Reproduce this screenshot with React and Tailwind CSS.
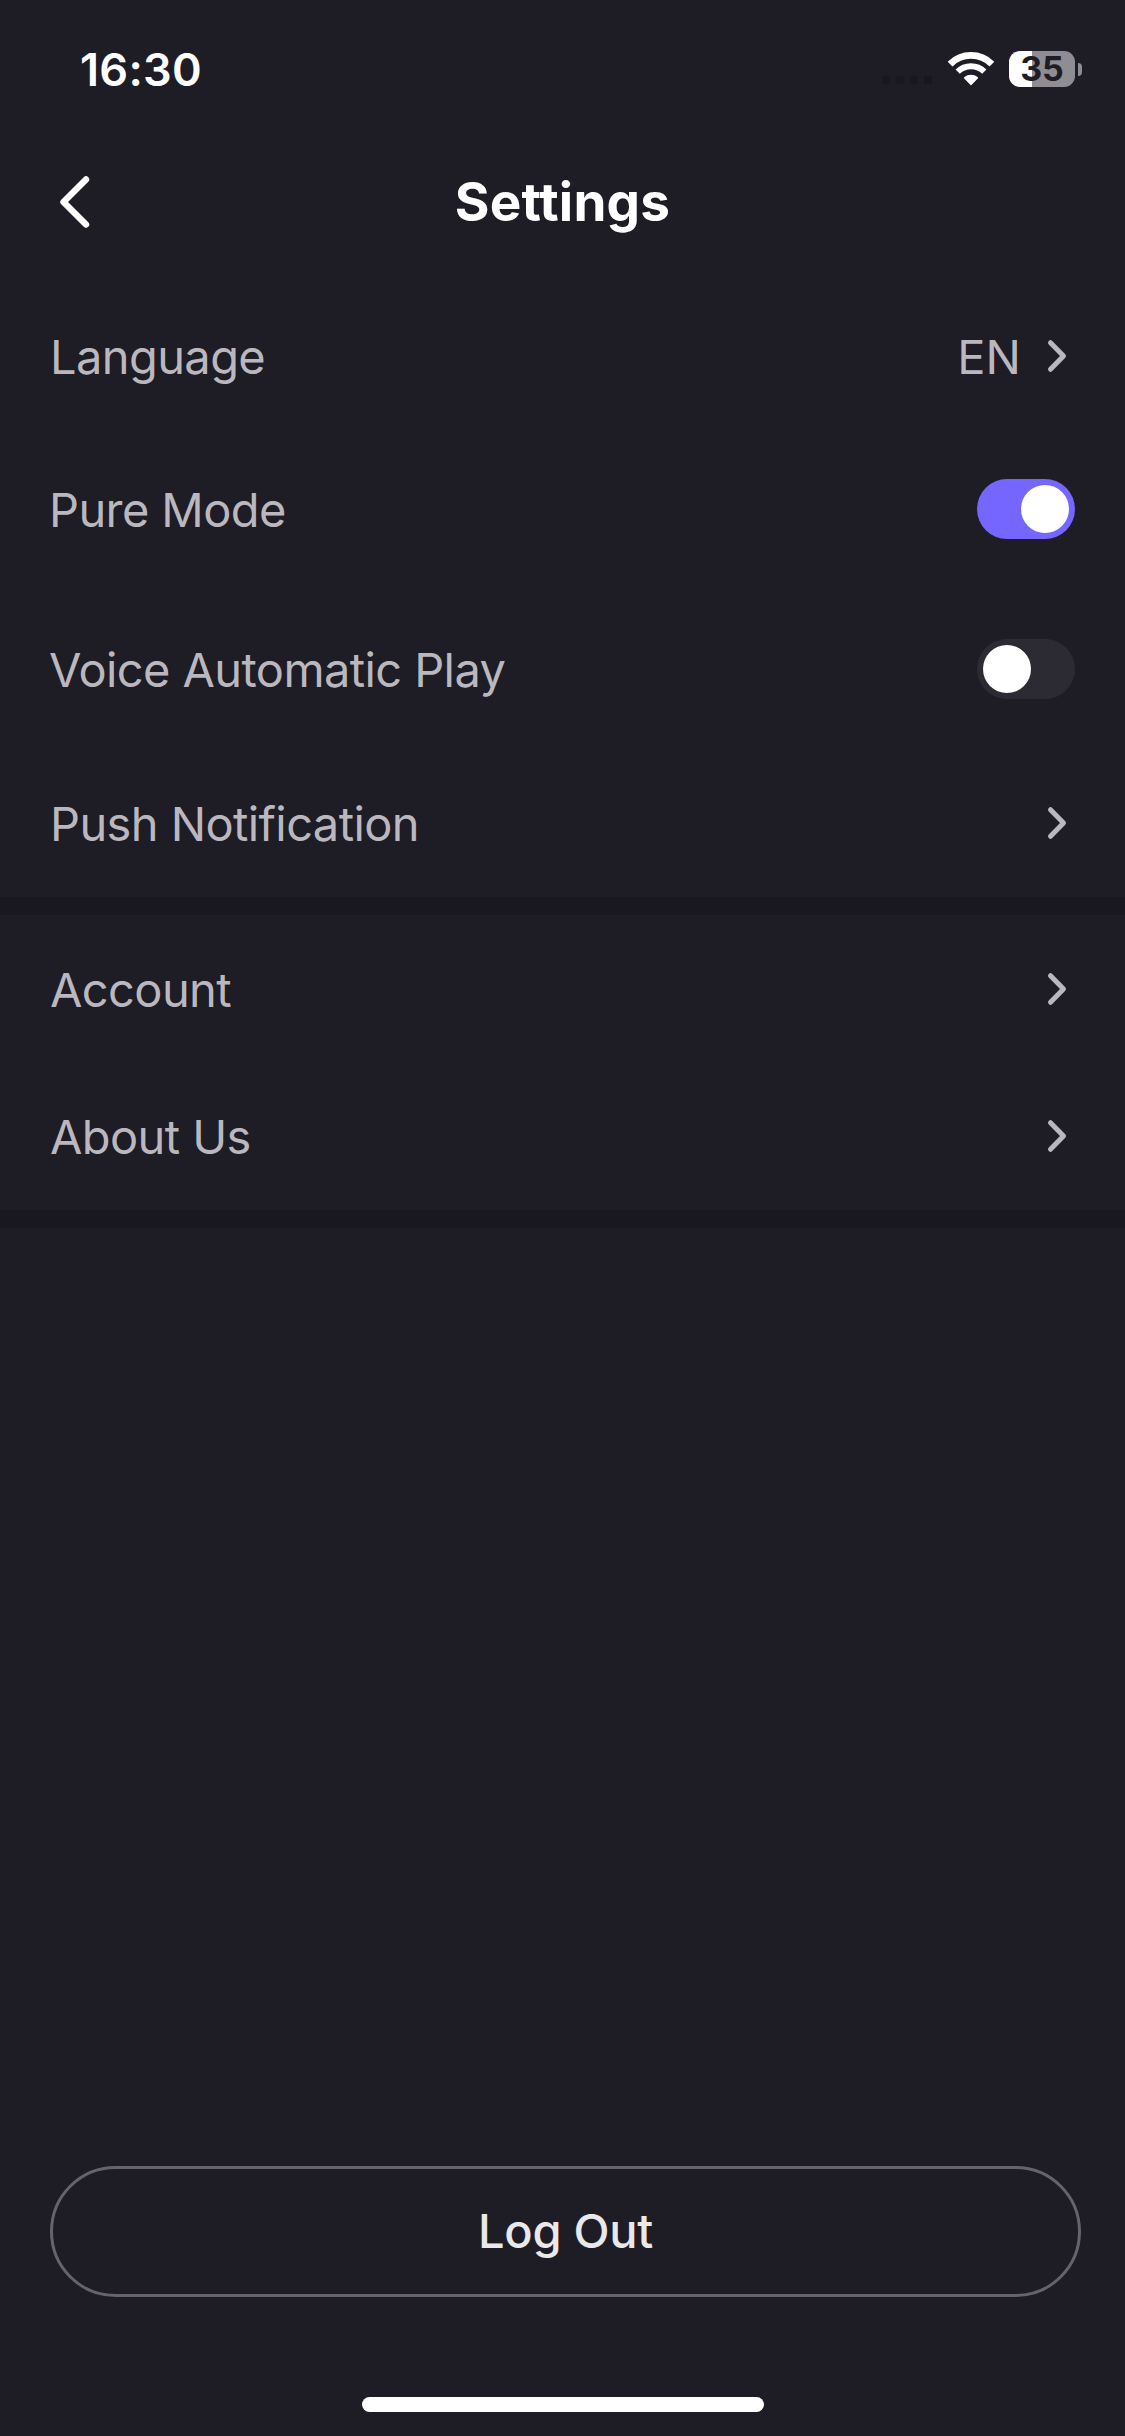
import React, { useState } from "react";

function StatusBar() {
  return (
    <div className="flex h-[138px] items-center justify-between pl-[80px] pr-[43px]">
      <span className="text-[45px] leading-none font-semibold tracking-[0.3px] text-white">16:30</span>

      <div className="flex items-center">
        {/* No signal */}
        <div className="mt-[22px] mr-[15px] flex gap-[6px]">
          <span className="size-2 rounded-xs bg-[#181620]" />
          <span className="size-2 rounded-xs bg-[#181620]" />
          <span className="size-2 rounded-xs bg-[#181620]" />
          <span className="size-2 rounded-xs bg-[#181620]" />
        </div>

        {/* Wifi */}
        <svg width="48" height="34" viewBox="0 0 48 34" fill="none" className="mr-[14px]">
          <path d="M3.1 12.1a29.6 29.6 0 0 1 41.8 0" stroke="#fff" strokeWidth="6.8" />
          <path d="M10.7 19.7a18.8 18.8 0 0 1 26.6 0" stroke="#fff" strokeWidth="6" />
          <path d="M24 33.4 17.2 26.4Q16.6 25.6 17.4 25.1a10.8 10.8 0 0 1 13.2 0Q31.4 25.6 30.8 26.4Z" fill="#fff" />
        </svg>

        {/* Battery */}
        <div className="flex h-9 w-[66px] items-center justify-center rounded-[11px] bg-linear-to-r from-white from-35% to-[#8f8d93] to-35%">
          <span className="text-[34px] leading-none font-bold text-[#1e1c25]">35</span>
        </div>
        <span className="ml-[3px] h-[13px] w-1 rounded-r-full bg-[#8f8d93]" />
      </div>
    </div>
  );
}

function Header() {
  return (
    <header className="grid h-[128px] grid-cols-3 items-center">
      <button className="pl-[56px]" aria-label="Back">
        <svg width="36" height="56" viewBox="0 0 36 56" fill="none">
          <path
            d="M30 5.5 7.5 28 30 50.5"
            stroke="#fff"
            strokeWidth="6.4"
            strokeLinecap="round"
            strokeLinejoin="round"
          />
        </svg>
      </button>
      <h1 className="text-center text-[53px] leading-none font-bold tracking-[0.2px] text-white">Settings</h1>
    </header>
  );
}

function ArrowRow({ label, value }) {
  return (
    <div className="flex h-[147px] items-center justify-between pl-[50px] pr-[56px] text-[#bab8be]">
      <span className="mt-[2px] text-[47px] leading-none tracking-[-0.6px]">{label}</span>
      <div className="flex items-center gap-6">
        {value && <span className="mt-[2px] text-[47px] leading-none">{value}</span>}
        <svg width="24" height="36" viewBox="0 0 24 36" fill="none">
          <path
            d="M5.5 4.7 18.5 18 5.5 31.3"
            stroke="currentColor"
            strokeWidth="5"
            strokeLinecap="round"
            strokeLinejoin="round"
          />
        </svg>
      </div>
    </div>
  );
}

function SwitchRow({ label, checked, onChange }) {
  return (
    <div className="flex h-[160px] items-center justify-between pl-[49px] pr-[50px] text-[#bab8be]">
      <span className="text-[47px] leading-none tracking-[-0.6px]">{label}</span>
      <button
        role="switch"
        aria-checked={checked}
        aria-label={label}
        onClick={() => onChange(!checked)}
        className={
          checked
            ? "flex h-[60px] w-[98px] items-center justify-end rounded-full bg-[#7566ff] px-[6px]"
            : "flex h-[60px] w-[98px] items-center justify-start rounded-full bg-[#2c2b34] px-[6px]"
        }
      >
        <span className="size-12 rounded-full bg-white" />
      </button>
    </div>
  );
}

export default function App() {
  const [pureMode, setPureMode] = useState(true);
  const [autoPlay, setAutoPlay] = useState(false);

  return (
    <div className="flex h-[2436px] w-[1125px] flex-col bg-[#1e1c25] font-['Inter','Liberation_Sans',sans-serif]">
      <StatusBar />
      <Header />

      <main className="pt-[16px]">
        <section className="pb-px">
          <ArrowRow label="Language" value="EN" />
          <SwitchRow label="Pure Mode" checked={pureMode} onChange={setPureMode} />
          <SwitchRow label="Voice Automatic Play" checked={autoPlay} onChange={setAutoPlay} />
          <ArrowRow label="Push Notification" />
        </section>
        <div className="h-[18px] bg-[#191720]" />
        <section className="pb-px">
          <ArrowRow label="Account" />
          <ArrowRow label="About Us" />
        </section>
        <div className="h-[18px] bg-[#191720]" />
      </main>

      <footer className="mt-auto flex flex-col items-center pb-6">
        <button className="mr-[44px] ml-[50px] h-[131px] w-[1031px] rounded-full border-3 border-[#65636c] pb-[3px] text-[47px] leading-none font-medium tracking-[-0.3px] text-[#e9e8ea]">
          Log Out
        </button>
        <div className="mt-[100px] h-[15px] w-[402px] rounded-full bg-white" />
      </footer>
    </div>
  );
}
